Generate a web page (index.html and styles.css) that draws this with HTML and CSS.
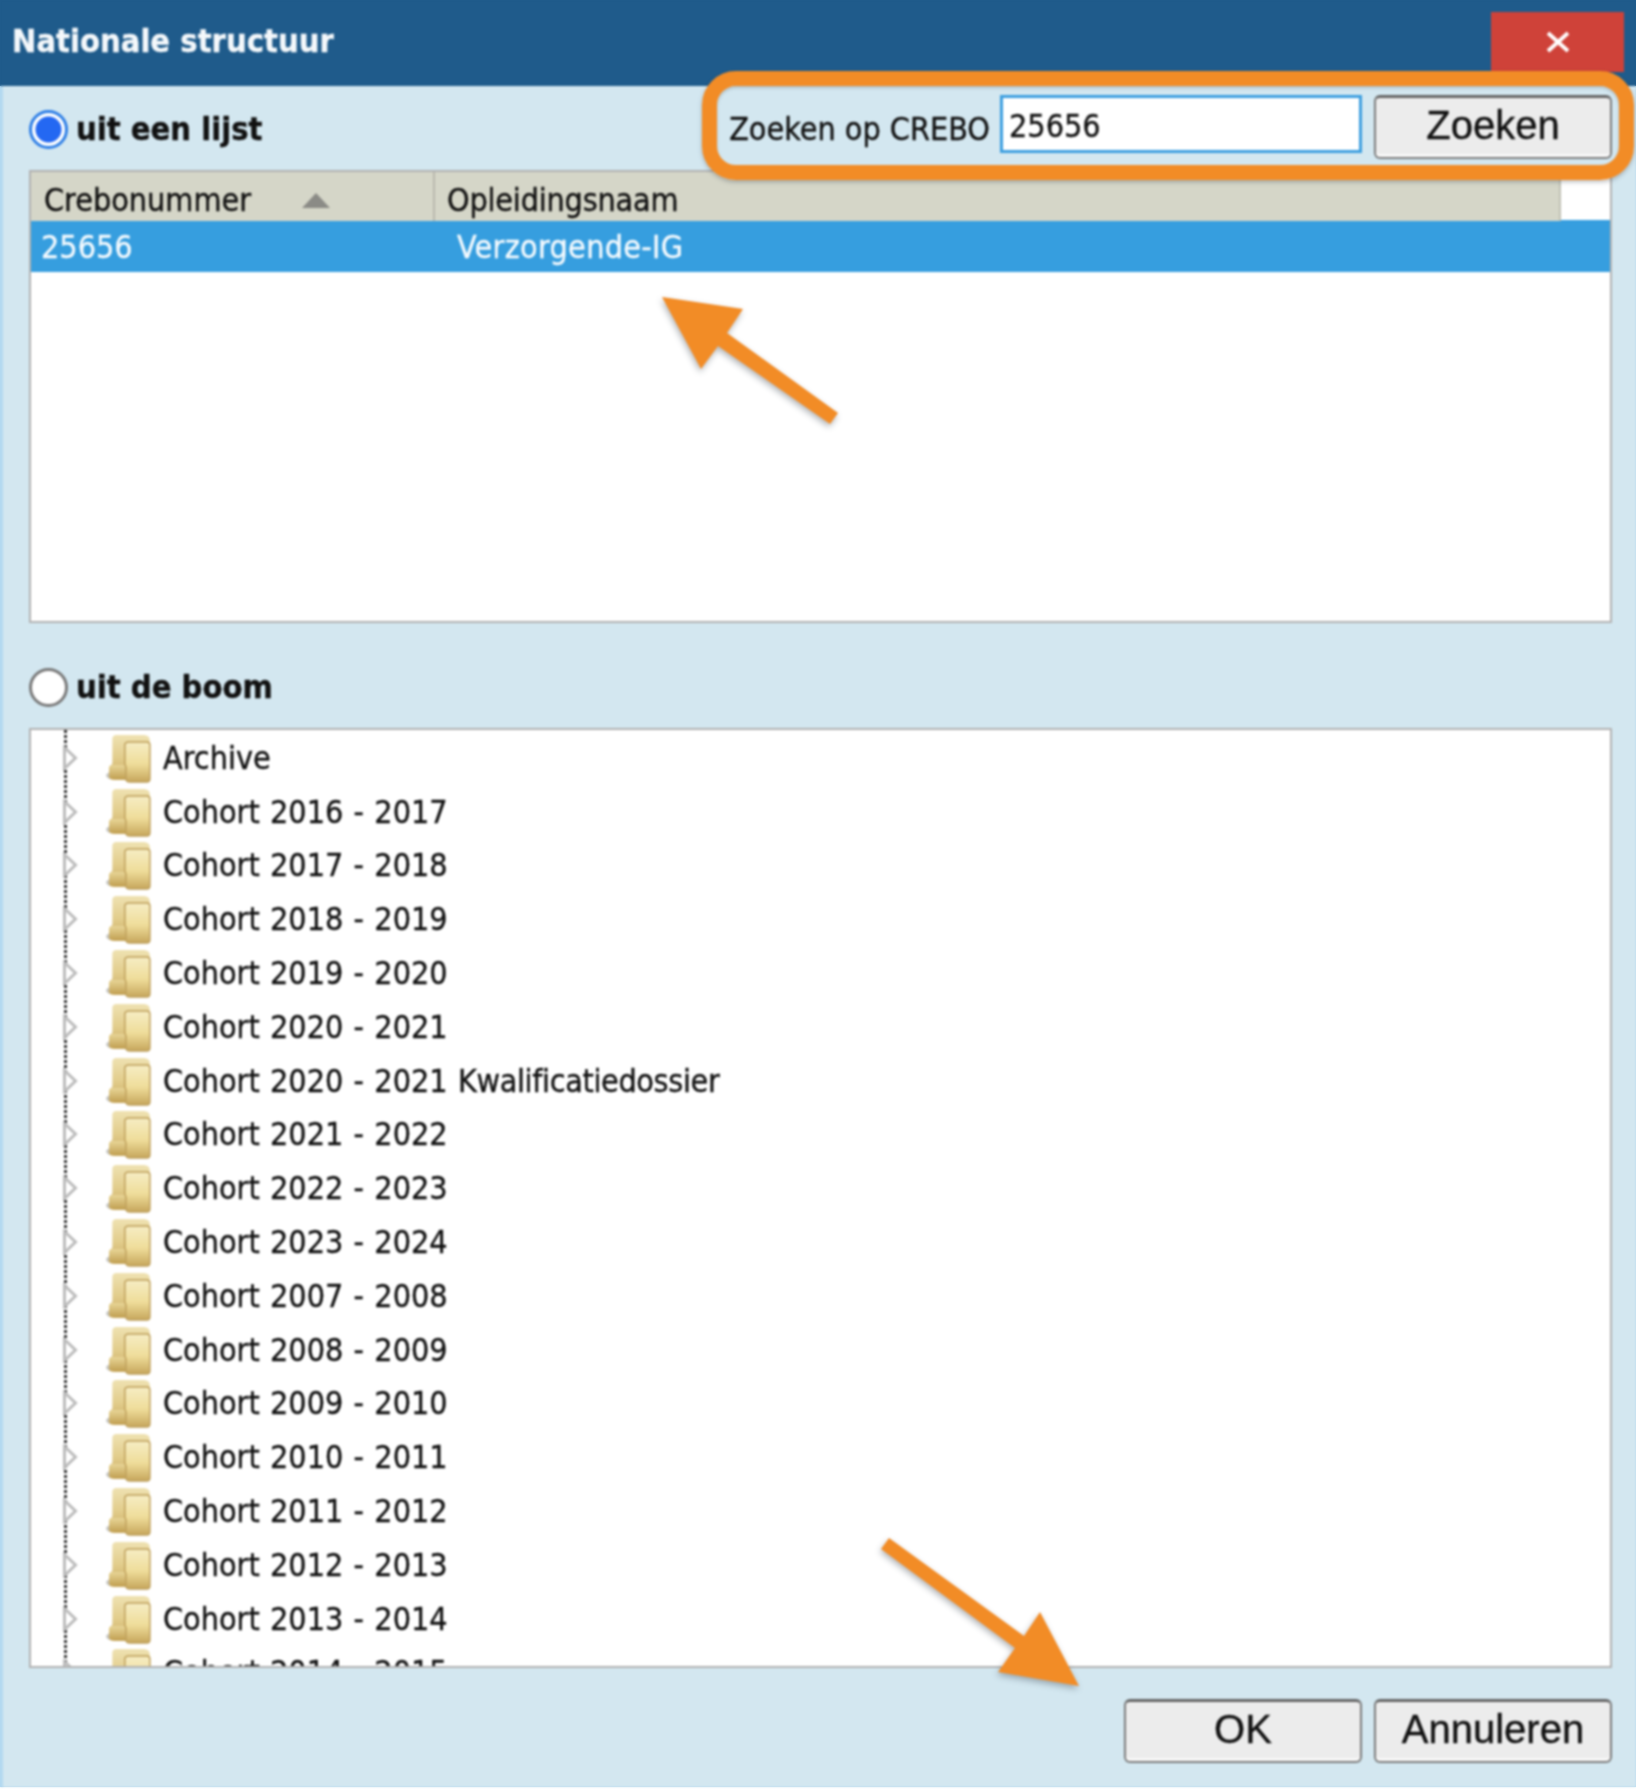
FILE: index.html
```html
<!DOCTYPE html>
<html lang="nl">
<head>
<meta charset="utf-8">
<title>Nationale structuur</title>
<link rel="stylesheet" href="styles.css">
</head>
<body>
<svg class="defs" width="0" height="0" aria-hidden="true">
  <defs>
    <linearGradient id="fBack" x1="0" y1="0" x2="0" y2="1"><stop offset="0" stop-color="#efe2b2"/><stop offset=".5" stop-color="#e2cd8c"/><stop offset="1" stop-color="#caab62"/></linearGradient>
    <linearGradient id="fLow" x1="0" y1="0" x2="0" y2="1"><stop offset="0" stop-color="#e8d596"/><stop offset="1" stop-color="#c2a154"/></linearGradient>
    <linearGradient id="fFront" x1="0" y1="0" x2="0" y2="1"><stop offset="0" stop-color="#f6edc4"/><stop offset=".55" stop-color="#efdd9a"/><stop offset="1" stop-color="#c6a65c"/></linearGradient>
    <symbol id="folder" viewBox="0 0 46 50" preserveAspectRatio="none">
      <path d="M2 42c1-2 3-3 5-3v7c-3 0-5-2-5-4z" fill="#c4c4c0"/>
      <path d="M8 6c0-3 2-4 4-4h25c5 0 7 2 7 6v36c0 2-1 3-3 3H10c-3 0-5-1-5-3V35c0-2 3-3 3-5z" fill="url(#fBack)"/>
      <path d="M7 32h14v14H9c-3 0-4-1-4-3v-8c0-2 1-3 2-3z" fill="url(#fLow)"/>
      <path d="M20 12c0-2 2-3 4-3h17c2 0 3 1 3 3v34c0 2-1 3-3 3H25c-3 0-4-1-4-3V34l-1-3z" fill="url(#fFront)" stroke="#bfa05c" stroke-width="1.4"/>
    </symbol>
    <symbol id="toggle" viewBox="0 0 16 26">
      <path d="M2.5 2.5l11 10.5-11 10.5z" fill="#fff" stroke="#bcbcbc" stroke-width="3"/>
    </symbol>
  </defs>
</svg>
<main class="dialog">
  <header class="titlebar">
    <h1 class="title">Nationale structuur</h1>
    <button class="close" type="button" aria-label="Sluiten">
      <svg width="26" height="22" viewBox="0 0 26 22"><path d="M3 2l20 18M23 2L3 20" stroke="#fff" stroke-width="3.8" fill="none"/></svg>
    </button>
  </header>
  <div class="body">
    <div class="top-row">
      <label class="choice"><input class="radio" type="radio" name="bron" checked>uit een lijst</label>
      <form class="search">
        <label class="search-label" for="crebo">Zoeken op CREBO</label>
        <input class="search-input" id="crebo" type="text" value="25656">
        <button class="btn" type="button">Zoeken</button>
      </form>
    </div>
    <section class="list">
      <div class="list-head">
        <div class="col col-first">Crebonummer<span class="sort"></span></div>
        <div class="col col-second">Opleidingsnaam</div>
      </div>
      <div class="list-row">
        <div class="cell-num">25656</div>
        <div class="cell-name">Verzorgende-IG</div>
      </div>
    </section>
    <div class="mid-row">
      <label class="choice"><input class="radio" type="radio" name="bron">uit de boom</label>
    </div>
    <ul class="tree">
      <li class="node"><svg class="toggle"><use href="#toggle"/></svg><svg class="folder"><use href="#folder"/></svg>Archive</li>
      <li class="node"><svg class="toggle"><use href="#toggle"/></svg><svg class="folder"><use href="#folder"/></svg>Cohort 2016 - 2017</li>
      <li class="node"><svg class="toggle"><use href="#toggle"/></svg><svg class="folder"><use href="#folder"/></svg>Cohort 2017 - 2018</li>
      <li class="node"><svg class="toggle"><use href="#toggle"/></svg><svg class="folder"><use href="#folder"/></svg>Cohort 2018 - 2019</li>
      <li class="node"><svg class="toggle"><use href="#toggle"/></svg><svg class="folder"><use href="#folder"/></svg>Cohort 2019 - 2020</li>
      <li class="node"><svg class="toggle"><use href="#toggle"/></svg><svg class="folder"><use href="#folder"/></svg>Cohort 2020 - 2021</li>
      <li class="node"><svg class="toggle"><use href="#toggle"/></svg><svg class="folder"><use href="#folder"/></svg><span>Cohort 2020 - 2021 <span class="narrow">Kwalificatiedossier</span></span></li>
      <li class="node"><svg class="toggle"><use href="#toggle"/></svg><svg class="folder"><use href="#folder"/></svg>Cohort 2021 - 2022</li>
      <li class="node"><svg class="toggle"><use href="#toggle"/></svg><svg class="folder"><use href="#folder"/></svg>Cohort 2022 - 2023</li>
      <li class="node"><svg class="toggle"><use href="#toggle"/></svg><svg class="folder"><use href="#folder"/></svg>Cohort 2023 - 2024</li>
      <li class="node"><svg class="toggle"><use href="#toggle"/></svg><svg class="folder"><use href="#folder"/></svg>Cohort 2007 - 2008</li>
      <li class="node"><svg class="toggle"><use href="#toggle"/></svg><svg class="folder"><use href="#folder"/></svg>Cohort 2008 - 2009</li>
      <li class="node"><svg class="toggle"><use href="#toggle"/></svg><svg class="folder"><use href="#folder"/></svg>Cohort 2009 - 2010</li>
      <li class="node"><svg class="toggle"><use href="#toggle"/></svg><svg class="folder"><use href="#folder"/></svg>Cohort 2010 - 2011</li>
      <li class="node"><svg class="toggle"><use href="#toggle"/></svg><svg class="folder"><use href="#folder"/></svg>Cohort 2011 - 2012</li>
      <li class="node"><svg class="toggle"><use href="#toggle"/></svg><svg class="folder"><use href="#folder"/></svg>Cohort 2012 - 2013</li>
      <li class="node"><svg class="toggle"><use href="#toggle"/></svg><svg class="folder"><use href="#folder"/></svg>Cohort 2013 - 2014</li>
      <li class="node"><svg class="toggle"><use href="#toggle"/></svg><svg class="folder"><use href="#folder"/></svg>Cohort 2014 - 2015</li>
    </ul>
    <footer class="actions">
      <button class="btn btn-ok" type="button">OK</button>
      <button class="btn" type="button">Annuleren</button>
    </footer>
  </div>
  <div class="highlight"></div>
  <svg class="arrows" viewBox="0 0 1636 1790" width="1636" height="1790" aria-hidden="true">
    <polygon points="662,297 743,309 727,333 838,413 830,424 718,346 701,369"/>
    <polygon points="889,1538 881,1549 1015,1648 998,1672 1079,1686 1040,1612 1024,1636"/>
  </svg>
</main>
</body>
</html>
```

FILE: styles.css
```css
* { box-sizing: border-box; }
html { margin: 0; padding: 0; background: #fff; }
body {
  margin: 0;
  padding: 0;
  height: 1790px;
  overflow: hidden;
  background: linear-gradient(#1f5b8b 0 86px, #b3d9f0 86px 1787px, #fff 1787px);
}
.defs { position: absolute; }
.dialog {
  position: relative;
  width: 1636px;
  height: 1787px;
  background: #d3e7f0;
  display: flex;
  flex-direction: column;
  overflow: hidden;
  font-family: "DejaVu Sans Condensed", "DejaVu Sans", sans-serif;
  color: #111;
  -webkit-text-stroke: 0.35px currentColor;
  filter: blur(0.8px);
}
.titlebar {
  height: 86px;
  flex: none;
  background: #1f5b8b;
  display: flex;
  justify-content: space-between;
  align-items: flex-start;
  padding: 12px 12px 0 12px;
}
.title {
  margin: 9px 0 0;
  font-size: 32.4px;
  line-height: 40px;
  font-weight: 700;
  color: #f4f8fb;
}
.close {
  width: 133px;
  height: 60px;
  border: 0;
  padding: 0;
  background: #cf4239;
  display: flex;
  align-items: center;
  justify-content: center;
}
.body {
  flex: 1;
  display: flex;
  flex-direction: column;
  padding: 0 24px 0 26px;
  border-left: 3px solid #b3d9f0;
}
.top-row {
  height: 84px;
  flex: none;
  display: flex;
  justify-content: space-between;
  align-items: flex-start;
}
.choice {
  display: flex;
  align-items: center;
  gap: 8px;
  font-size: 32.4px;
  font-weight: 700;
  line-height: 40px;
  margin-top: 23px;
}
.radio {
  appearance: none;
  margin: 0;
  width: 39px;
  height: 39px;
  border-radius: 50%;
  border: 3px solid #7a7a7a;
  background: #fff;
  flex: none;
}
.radio:checked {
  border: 3px solid #2f7fe6;
  background: radial-gradient(circle, #2468f2 0 12.5px, #fff 13.5px);
}
.search {
  display: flex;
  align-items: flex-start;
  margin-top: 9px;
}
.search-label {
  font-size: 32px;
  line-height: 40px;
  margin: 14px 10px 0 0;
}
.search-input {
  width: 362px;
  height: 58px;
  border: 3px solid #3d9fe0;
  background: #fff;
  padding: 3px 6px 0;
  font: 32px "DejaVu Sans Condensed", "DejaVu Sans", sans-serif;
  color: #111;
  margin-right: 12px;
}
.btn {
  width: 238px;
  height: 64px;
  border: 2px solid #7c7c7c;
  border-top: 3px solid #666;
  border-radius: 6px;
  background: #ececec;
  box-shadow: inset 0 -3px 0 #f8f8f8;
  font: 40px "Liberation Sans", Arial, sans-serif;
  color: #111;
  padding: 0 0 4px;
}
.list {
  height: 453px;
  flex: none;
  background: #fff;
  border: 2px solid #b2b2b2;
}
.list-head {
  display: grid;
  grid-template-columns: 404px 1fr 49px;
  height: 48px;
}
.col {
  background: #d5d6c8;
  font-size: 32px;
  line-height: 42px;
  padding-top: 7px;
  display: flex;
  align-items: center;
}
.col-first { padding-left: 13px; border-right: 2px solid #b9b9ae; gap: 51px; }
.col-second { padding-left: 12px; border-right: 2px solid #c0c1b4; letter-spacing: -0.2px; }
.sort {
  width: 0;
  height: 0;
  border-left: 14px solid transparent;
  border-right: 14px solid transparent;
  border-bottom: 15px solid #8b8b86;
}
.list-row {
  display: grid;
  grid-template-columns: 426px 1fr;
  height: 52px;
  background: #369edf;
  color: #f4fafe;
  font-size: 32px;
  line-height: 54px;
}
.cell-num { padding-left: 10px; }
.cell-name { letter-spacing: 0.3px; }
.mid-row { height: 105px; flex: none; }
.mid-row .choice { margin-top: 44px; }
.tree {
  list-style: none;
  margin: 0;
  padding: 1px 0 0;
  height: 940px;
  flex: none;
  overflow: hidden;
  background-color: #fff;
  background-image: linear-gradient(#333 55%, transparent 55%);
  background-size: 3px 5px;
  background-position: 33px 0;
  background-repeat: repeat-y;
  border: 2px solid #b2b2b2;
}
.node {
  height: 53.8px;
  display: flex;
  align-items: center;
  padding-left: 31px;
  font-size: 32px;
  white-space: nowrap;
  word-spacing: 1.2px;
}
.narrow { letter-spacing: -0.35px; }
.toggle { width: 16px; height: 26px; flex: none; margin-right: 26px; }
.folder { width: 48px; height: 50px; flex: none; margin-right: 11px; }
.actions {
  display: flex;
  justify-content: flex-end;
  gap: 12px;
  margin-top: 31px;
}
.highlight {
  position: absolute;
  left: 702px;
  top: 71px;
  width: 932px;
  height: 109px;
  border: 15px solid #f28c26;
  border-radius: 34px;
  box-shadow: 0 2px 4px rgba(60, 70, 80, .35), inset 0 2px 3px rgba(60, 70, 80, .25);
}
.arrows {
  position: absolute;
  left: 0;
  top: 0;
  fill: #f28c26;
  filter: drop-shadow(-1px 3px 3px rgba(60, 70, 80, .4));
  pointer-events: none;
}
```
